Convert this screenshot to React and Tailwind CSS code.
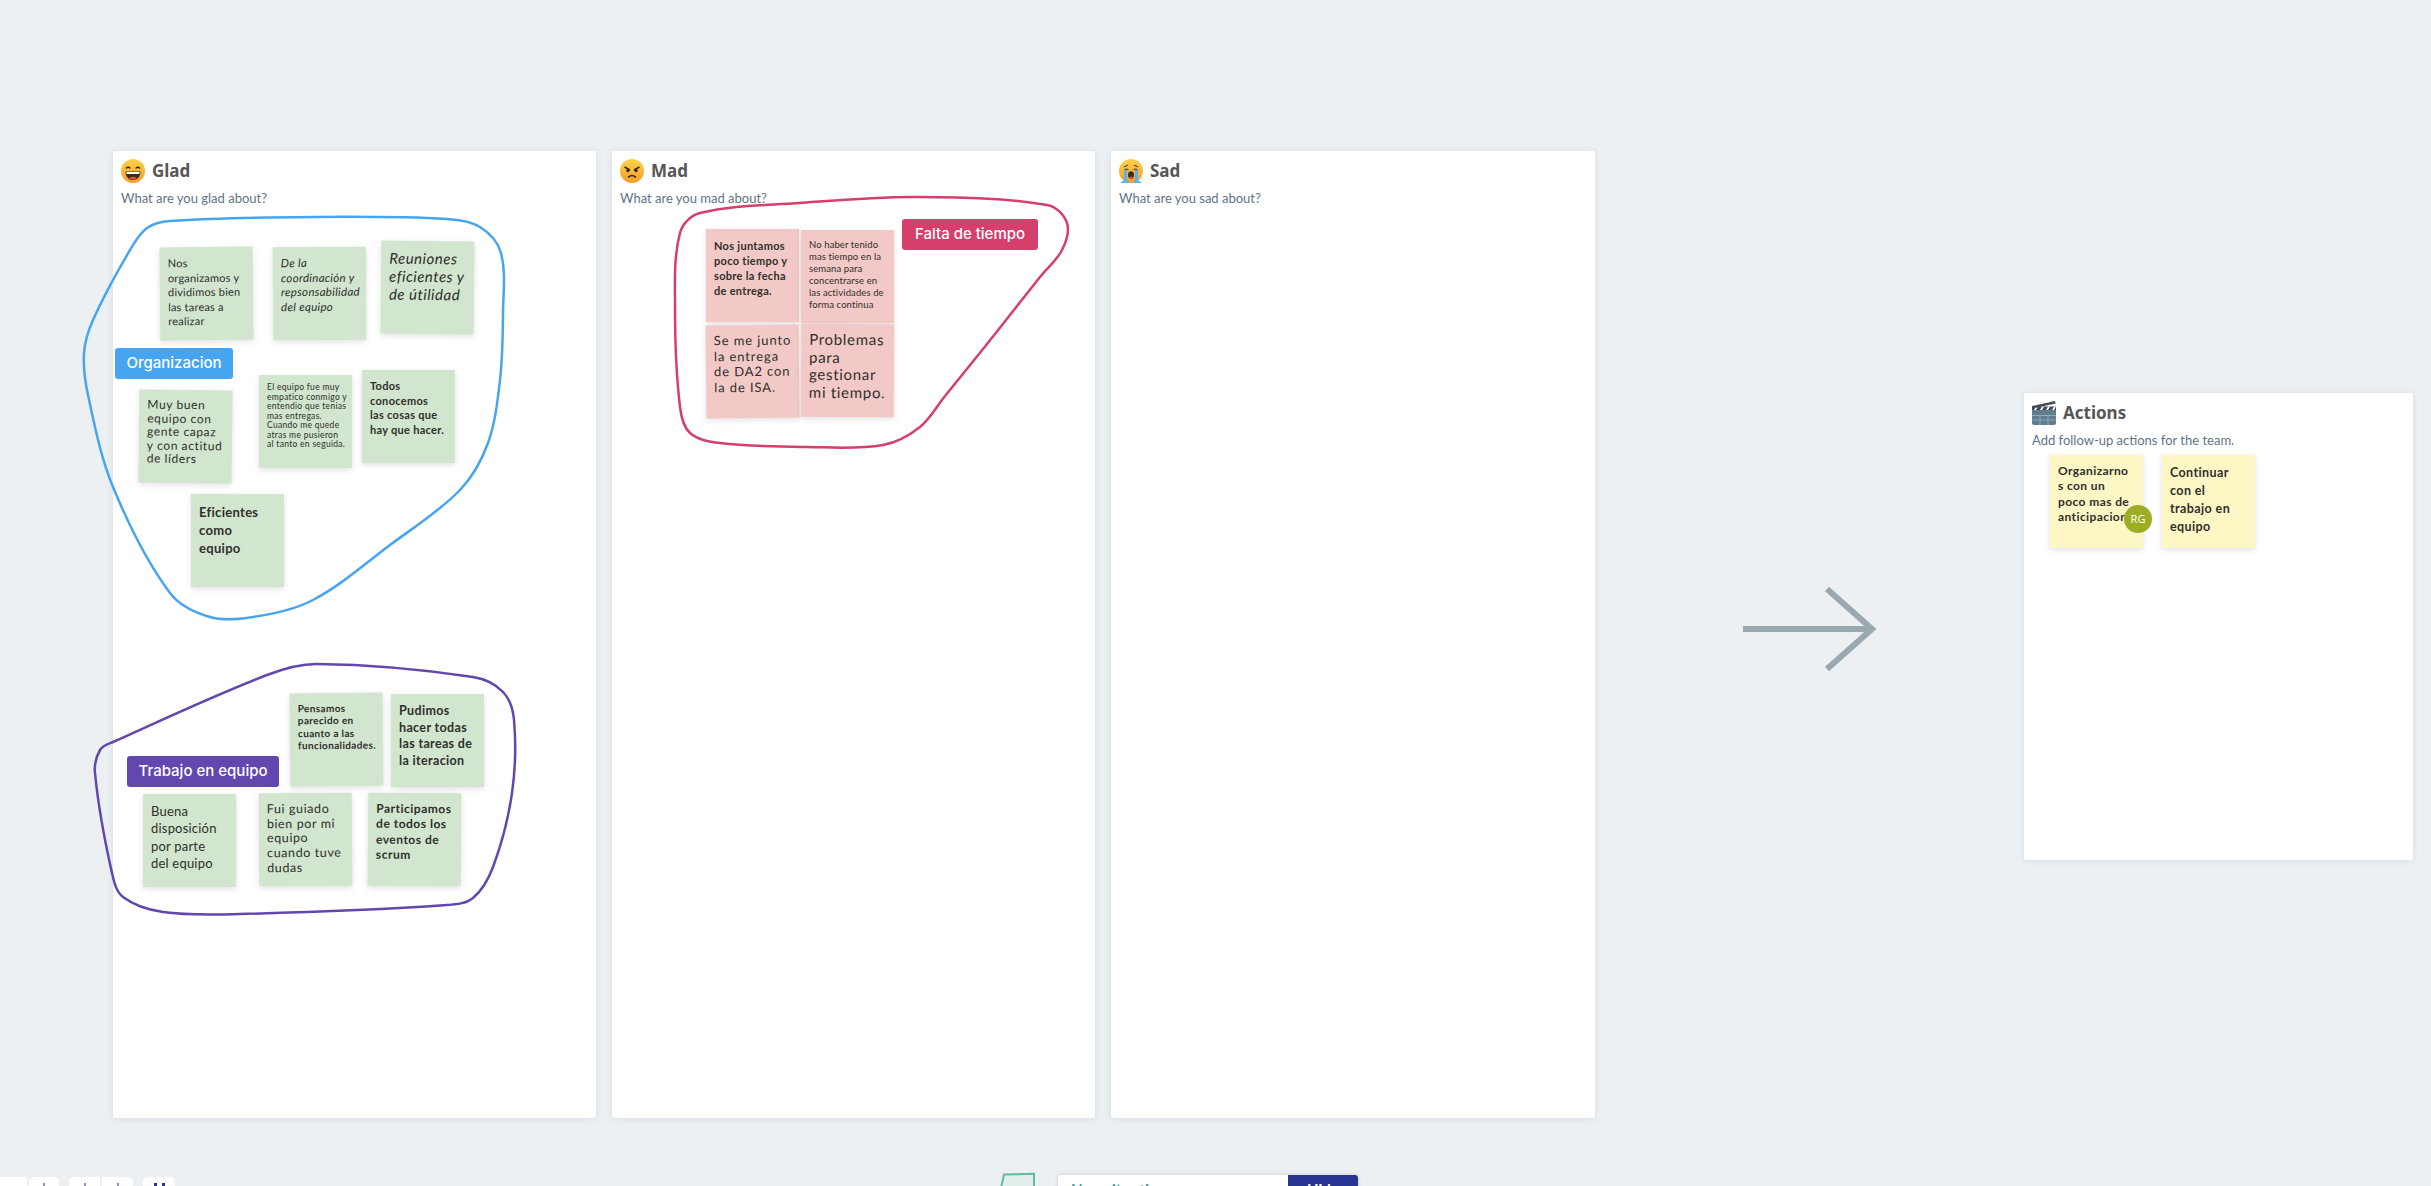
const sans = "font-['Lato','Noto_Sans',sans-serif]"

function smooth(points) {
  // closed spline through the hand-picked points, handles scaled to segment length
  const n = points.length
  let d = `M${points[0][0]} ${points[0][1]}`
  const handle = (a, b, len) => {
    const dx = b[0] - a[0]
    const dy = b[1] - a[1]
    const k = len / 3 / Math.hypot(dx, dy)
    return [dx * k, dy * k]
  }
  for (let i = 0; i < n; i++) {
    const p0 = points[(i - 1 + n) % n]
    const p1 = points[i]
    const p2 = points[(i + 1) % n]
    const p3 = points[(i + 2) % n]
    const len = Math.hypot(p2[0] - p1[0], p2[1] - p1[1])
    const h1 = handle(p0, p2, len)
    const h2 = handle(p1, p3, len)
    d += `C${p1[0] + h1[0]} ${p1[1] + h1[1]} ${p2[0] - h2[0]} ${p2[1] - h2[1]} ${p2[0]} ${p2[1]}`
  }
  return d + 'Z'
}

const blueLoop = [[170, 221], [313, 217], [447, 219], [480, 227], [501, 253], [503, 313], [500, 380], [488, 443], [460, 490], [390, 545], [313, 600], [253, 617], [210, 617], [170, 593], [113, 487], [88, 395], [84, 353], [93, 320], [130, 250], [147, 228]]
const purpleLoop = [[317, 664], [473, 677], [503, 692], [514, 720], [512, 793], [493, 867], [473, 898], [447, 905], [240, 914], [163, 912], [123, 897], [112, 873], [95, 773], [100, 750], [113, 742], [267, 675]]
const redLoop = [[917, 197], [1047, 205], [1067, 223], [1062, 250], [1040, 277], [991, 339], [945, 396], [920, 427], [883, 445], [807, 447], [720, 443], [690, 433], [680, 407], [675, 307], [680, 233], [700, 213], [800, 203]]

const gladNotes = [
  { pos: 'left-[47px] top-[96px] rotate-[-0.5deg]', type: 'p-2 pt-[9px] text-[11px] leading-[14.5px] tracking-[0.2px]', text: 'Nos\norganizamos y\ndividimos bien\nlas tareas a\nrealizar' },
  { pos: 'left-[160px] top-[96px] rotate-[-0.3deg]', type: 'p-2 pt-[9px] text-[11.5px] leading-[14.5px] italic tracking-[0.3px]', text: 'De la\ncoordinación y\nrepsonsabilidad\ndel equipo' },
  { pos: 'left-[268px] top-[90px] rotate-[0.5deg]', type: 'p-2 text-[15px] leading-[18px] italic tracking-[0.5px]', text: 'Reuniones\neficientes y\nde útilidad' },
  { pos: 'left-[26px] top-[239px] rotate-[0.7deg]', type: 'p-2 text-[12px] leading-[13.5px] tracking-[0.6px]', text: 'Muy buen\nequipo con\ngente capaz\ny con actitud\nde líders' },
  { pos: 'left-[146px] top-[224px]', type: 'p-2 text-[8.5px] leading-[9.5px] tracking-[0.3px]', text: 'El equipo fue muy\nempatico conmigo y\nentendio que tenias\nmas entregas.\nCuando me quede\natras me pusieron\nal tanto en seguida.' },
  { pos: 'left-[249px] top-[219px]', type: 'p-2 pt-[9px] text-[11px] leading-[14.5px] font-bold tracking-[0.3px]', text: 'Todos\nconocemos\nlas cosas que\nhay que hacer.' },
  { pos: 'left-[78px] top-[343px]', type: 'p-2 pt-[9px] text-[13px] leading-[18px] font-bold tracking-[0.3px]', text: 'Eficientes\ncomo\nequipo' },
  { pos: 'left-[177px] top-[542px] rotate-[-0.5deg]', type: 'p-2 pt-[9px] text-[10px] leading-[12.3px] font-bold tracking-[0.35px]', text: 'Pensamos\nparecido en\ncuanto a las\nfuncionalidades.' },
  { pos: 'left-[278px] top-[543px]', type: 'p-2 pt-[9px] text-[12.5px] leading-[16.7px] font-bold tracking-[0.35px]', text: 'Pudimos\nhacer todas\nlas tareas de\nla iteracion' },
  { pos: 'left-[30px] top-[643px]', type: 'p-2 pt-[9px] text-[13px] leading-[17.3px] tracking-[0.2px]', text: 'Buena\ndisposición\npor parte\ndel equipo' },
  { pos: 'left-[146px] top-[642px] rotate-[-0.4deg]', type: 'p-2 pt-[9px] text-[12.5px] leading-[14.7px] tracking-[0.6px]', text: 'Fui guiado\nbien por mi\nequipo\ncuando tuve\ndudas' },
  { pos: 'left-[255px] top-[642px] rotate-[0.4deg]', type: 'p-2 pt-[8px] text-[12px] leading-[15.3px] font-bold tracking-[0.5px]', text: 'Participamos\nde todos los\neventos de\nscrum' },
]

const madNotes = [
  { pos: 'left-[94px] top-[78px]', type: 'p-2 pt-[9px] text-[11px] leading-[15px] font-bold tracking-[0.3px]', text: 'Nos juntamos\npoco tiempo y\nsobre la fecha\nde entrega.' },
  { pos: 'left-[189px] top-[79px]', type: 'p-2 pt-[9px] text-[9.5px] leading-[12px] tracking-[0.1px]', text: 'No haber tenido\nmas tiempo en la\nsemana para\nconcentrarse en\nlas actividades de\nforma continua' },
  { pos: 'left-[94px] top-[174px] rotate-[-0.5deg]', type: 'p-2 pt-[8px] text-[13px] leading-[15.5px] tracking-[0.9px]', text: 'Se me junto\nla entrega\nde DA2 con\nla de ISA.' },
  { pos: 'left-[189px] top-[173px] rotate-[0.3deg]', type: 'p-2 pt-[7px] text-[15px] leading-[17.5px] tracking-[0.7px]', text: 'Problemas\npara\ngestionar\nmi tiempo.' },
]

const actionNotes = [
  { pos: 'left-[26px] top-[62px]', type: 'p-2 pt-[8px] text-[12px] leading-[15.3px] font-bold tracking-[0.4px]', text: 'Organizarno\ns con un\npoco mas de\nanticipacion' },
  { pos: 'left-[138px] top-[62px]', type: 'p-2 pt-[9px] text-[12.5px] leading-[18px] font-bold tracking-[0.4px]', text: 'Continuar\ncon el\ntrabajo en\nequipo' },
]

function Note({ note, color }) {
  return (
    <div className={`absolute w-[93px] h-[93px] shadow-[0_2px_6px_rgba(0,0,0,0.12)] whitespace-pre text-[#2f2f2b] ${sans} ${note.pos} ${note.type} ${color}`}>
      {note.text}
    </div>
  )
}

function Label({ className, children }) {
  return (
    <div className={`absolute h-[31px] rounded-[3px] flex items-center justify-center text-white text-[15px] font-medium font-['Inter',sans-serif] ${className}`}>
      {children}
    </div>
  )
}

function Face({ children }) {
  return (
    <svg viewBox="0 0 24 24" className="w-6 h-6 shrink-0">
      <defs>
        <linearGradient id="face" x1="0" y1="0" x2="0" y2="1">
          <stop offset="0" stopColor="#fcd34a" />
          <stop offset="1" stopColor="#f59e2b" />
        </linearGradient>
      </defs>
      <circle cx="12" cy="12" r="12" fill="url(#face)" />
      {children}
    </svg>
  )
}

const gladFace = (
  <Face>
    <path d="M5 9.500q2.200-2.500 4.400 0M14.600 9.500q2.200-2.500 4.400 0" fill="none" stroke="#3d2a1a" strokeWidth="1.300" />
    <path d="M4.500 12.500h15c0 5-3.300 8.500-7.500 8.500s-7.500-3.500-7.500-8.500z" fill="#3d2a1a" />
    <path d="M5.500 13h13v2h-13z" fill="#fff" />
    <path d="M8 19q4-2.500 8 0q-4 3-8 0z" fill="#ef4b3c" />
  </Face>
)

const madFace = (
  <Face>
    <path d="M4.500 8l5.500 3M19.500 8l-5.500 3" stroke="#3d2a1a" strokeWidth="1.600" />
    <circle cx="8" cy="11.500" r="1.700" fill="#3d2a1a" />
    <circle cx="16" cy="11.500" r="1.700" fill="#3d2a1a" />
    <path d="M8 18.500q4-4 8 0" fill="none" stroke="#3d2a1a" strokeWidth="1.600" />
  </Face>
)

const sadFace = (
  <Face>
    <path d="M5 8l4-2M19 8l-4-2M5.500 11q2-1.800 4 0M14.500 11q2-1.800 4 0" fill="none" stroke="#6b4a1f" strokeWidth="1.100" />
    <ellipse cx="12" cy="16" rx="3" ry="3.800" fill="#3d2a1a" />
    <path d="M9.800 18.500q2.200-2 4.400 0q-2.200 1.500-4.400 0z" fill="#ef4b3c" />
    <path d="M5 11h3v10l2.500 3H1l4-3zM16 11h3v10l4 3H13.500l2.500-3z" fill="#5ab4e8" />
  </Face>
)

const clapper = (
  <svg viewBox="0 0 24 24" className="w-6 h-6 shrink-0">
    <path d="M0 9h24v13a2 2 0 0 1-2 2H2a2 2 0 0 1-2-2z" fill="#5f7d8f" />
    <path d="M0 14.500h24M0 19h24M8 14.500V24M16 14.500V24" stroke="#a9bcc7" strokeWidth="0.700" />
    <path d="M0 5.500h24V9H0z" fill="#3f4c55" />
    <path d="M2 9l2-3.500h2L4 9zM8 9l2-3.500h2L10 9zM14 9l2-3.500h2L16 9zM20 9l2-3.500h2L22 9z" fill="#fff" />
    <path d="M0 5L23 0l.6 2.500L.6 7.500z" fill="#3f4c55" />
    <path d="M3 4.500l1.500-2.300 1.600-.4-1.500 2.300zM9 3.200l1.500-2.300 1.600-.4-1.500 2.300zM15 1.900l1.500-1.900 1.600 0-1.500 1.500z" fill="#fff" />
  </svg>
)

function Panel({ icon, title, hint, className, children }) {
  return (
    <section className={`relative shrink-0 bg-white rounded-[2px] shadow-[0_1px_6px_rgba(60,80,100,0.12)] ${className}`}>
      <div className="flex items-center gap-[7px] pl-2 pt-[8px] h-[32px]">
        {icon}
        <h2 className="text-[17px] font-bold text-[#565656] font-['Noto_Sans',sans-serif]">{title}</h2>
      </div>
      <p className={`pl-2 mt-[6px] text-[13px] leading-[18px] text-[#5f7486] ${sans}`}>{hint}</p>
      {children}
    </section>
  )
}

export default function App() {
  return (
    <div className="relative h-screen overflow-hidden bg-[#ecf0f3]">
      {/* Board */}
      <div className="flex items-start pt-[151px] pl-[113px]">
        <div className="flex gap-4">
          <Panel icon={gladFace} title="Glad" hint="What are you glad about?" className="w-[483px] h-[967px]">
            {gladNotes.map((n) => <Note key={n.text} note={n} color="bg-[#d1e5cf]" />)}
            <Label className="left-[2px] top-[197px] w-[118px] bg-[#47a5f0]">Organizacion</Label>
            <Label className="left-[14px] top-[605px] w-[152px] bg-[#6247ae]">Trabajo en equipo</Label>
          </Panel>
          <Panel icon={madFace} title="Mad" hint="What are you mad about?" className="w-[483px] h-[967px]">
            {madNotes.map((n) => <Note key={n.text} note={n} color="bg-[#f2c9c6]" />)}
            <Label className="left-[290px] top-[68px] w-[136px] bg-[#d43f6b]">Falta de tiempo</Label>
          </Panel>
          <Panel icon={sadFace} title="Sad" hint="What are you sad about?" className="w-[484px] h-[967px]" />
        </div>
        <Panel icon={clapper} title="Actions" hint="Add follow-up actions for the team." className="w-[389px] h-[467px] ml-[429px] mt-[242px]">
          {actionNotes.map((n) => <Note key={n.text} note={n} color="bg-[#fdf6c5]" />)}
          <div className="absolute left-[100px] top-[112px] w-[28px] h-[28px] rounded-full bg-[#9dae24] flex items-center justify-center text-white text-[11px] font-['Noto_Sans',sans-serif]">RG</div>
        </Panel>
      </div>

      {/* Drawn loops and arrow */}
      <svg className="absolute inset-0 w-full h-full pointer-events-none" fill="none">
        <path d={smooth(blueLoop)} stroke="#47a5f0" strokeWidth="2.500" />
        <path d={smooth(purpleLoop)} stroke="#6247ae" strokeWidth="2.500" />
        <path d={smooth(redLoop)} stroke="#d43f6b" strokeWidth="2.500" />
        <path d="M1743 629H1870M1827 589L1872 629L1827 669" stroke="#9aa8b0" strokeWidth="6" />
      </svg>

      {/* Bottom toolbar, cut by the window */}
      <div className="absolute left-0 top-[1177px] flex gap-[10px] text-[#283593] text-[12px]">
        <div className="flex gap-[2px]">
          <div className="w-[27px] h-[20px] bg-white rounded-tr-[2px]" />
          <div className="w-[30px] h-[20px] bg-white rounded-t-[5px] flex justify-center pt-[6px]"><span className="w-[2px] h-[8px] bg-[#8c90c4]" /></div>
        </div>
        <div className="flex gap-[2px]">
          <div className="w-[31px] h-[20px] bg-white rounded-tl-[5px] flex justify-center pt-[6px]"><span className="w-[2px] h-[8px] bg-[#8c90c4]" /></div>
          <div className="w-[31px] h-[20px] bg-white rounded-tr-[5px] flex justify-center pt-[6px]"><span className="w-[2px] h-[8px] bg-[#8c90c4]" /></div>
        </div>
        <div className="w-[32px] h-[20px] bg-white rounded-t-[5px] flex justify-center gap-[5px] pt-[6px]">
          <span className="w-[3px] h-[8px] bg-[#283593]" />
          <span className="w-[3px] h-[8px] bg-[#283593]" />
        </div>
      </div>

      <svg viewBox="0 0 36 16" className="absolute left-[1000px] top-[1172px] w-[36px] h-[16px]">
        <path d="M4 2.500l30-.7V16H1z" fill="#e1f0ec" stroke="#63b8a6" strokeWidth="2" />
      </svg>

      <div className="absolute left-[1058px] top-[1175px] w-[300px] h-[30px] flex rounded-t-[3px] overflow-hidden bg-white shadow-[0_0_4px_rgba(0,0,0,0.15)]">
        <div className={`flex-1 pl-[13px] pt-[5px] text-[15px] leading-[18px] font-bold text-[#3f9c95] whitespace-nowrap ${sans}`}>Necesitas tiempo para pensar</div>
        <div className={`w-[70px] bg-[#283593] text-white text-center pt-[5px] text-[15px] leading-[18px] font-bold ${sans}`}>Hide</div>
      </div>
    </div>
  )
}
